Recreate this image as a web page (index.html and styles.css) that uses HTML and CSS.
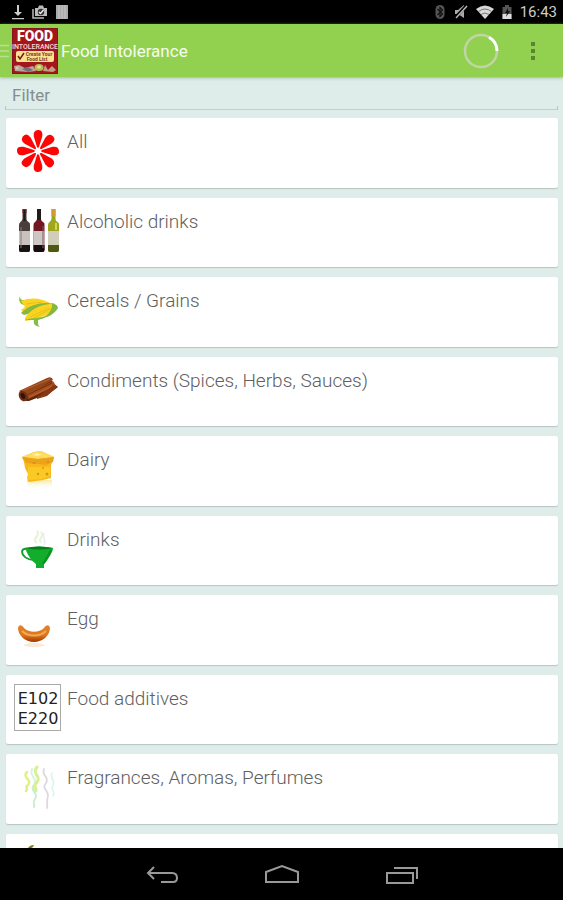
FILE: index.html
```html
<!DOCTYPE html>
<html lang="en">
<head>
<meta charset="utf-8">
<meta name="viewport" content="width=device-width, initial-scale=1">
<title>Food Intolerance</title>
<link rel="stylesheet" href="styles.css">
</head>
<body>
<div class="status-bar">
  <div class="status-group">
    <svg width="12" height="16" viewBox="0 0 12 16" fill="#ccc" aria-hidden="true"><path d="M5 1h2v7h3l-4 4-4-4h3zM0 14h12v1.300H0z"/></svg>
    <svg width="16" height="16" viewBox="0 0 16 16" fill="none" aria-hidden="true"><path d="M1 5v9h11" stroke="#bbb" stroke-width="1.500"/><path d="M3 4h3l1-2.500h4L12 4h3v8H3z" fill="#bbb"/><circle cx="9" cy="8" r="3.200" fill="#333"/><path d="M7 8l1.500 1.500L11.500 6" stroke="#eee" stroke-width="1.400"/></svg>
    <svg width="12" height="16" viewBox="0 0 12 16" aria-hidden="true"><path fill="#aaa" d="M0 1h12v14H0z"/><path d="M3 1v14M6 1v14M9 1v14" stroke="#c8c8c8"/></svg>
  </div>
  <div class="status-group">
    <svg width="12" height="16" viewBox="0 0 12 16" fill="none" aria-hidden="true"><rect x="1.500" y="1" width="9" height="14" rx="4.500" fill="#555"/><path d="M3.500 5l5 5L6 12.500v-9L8.500 6l-5 5" stroke="#111" stroke-width="1.200"/></svg>
    <svg width="14" height="16" viewBox="0 0 14 16" aria-hidden="true"><path d="M1 6h3l6-5v13L4 10H1z" fill="#aaa"/><path d="M13 1L1 14" stroke="#000" stroke-width="3"/><path d="M13 2L2 14" stroke="#bbb" stroke-width="1.400"/></svg>
    <svg width="18" height="16" viewBox="0 0 18 16" aria-hidden="true"><path d="M0 5q9-7 18 0L9 15z" fill="#d8d8d8"/><path d="M2.500 7.500q6.500-5 13 0M5 10.500q4-3 8 0" fill="none" stroke="#777"/></svg>
    <svg width="10" height="16" viewBox="0 0 10 16" aria-hidden="true"><path d="M3 1h4v2h2.500v12h-9V3H3z" fill="#555"/><path d="M.5 10h9v5h-9z" fill="#ddd"/><path d="M6 4L3 9h2l-1 4 4-6H6z" fill="#111"/></svg>
    <span class="clock">16:43</span>
  </div>
</div>

<header class="app-bar">
  <button class="drawer" type="button" aria-label="Open menu">
    <svg width="10" height="16" viewBox="0 0 10 16" aria-hidden="true"><path d="M0 2.500h9M0 8h9M0 13.500h9" stroke="#b9e08c" stroke-width="1.500"/></svg>
  </button>
  <svg class="logo" width="46" height="46" viewBox="0 0 46 46" role="img" aria-label="Food Intolerance logo">
    <rect width="46" height="46" fill="#a3161c"/>
    <rect x=".5" y=".5" width="45" height="45" fill="none" stroke="#85151a"/>
    <text class="logo-title" x="23" y="13" text-anchor="middle">FOOD</text>
    <text class="logo-subtitle" x="23" y="21" text-anchor="middle">INTOLERANCE</text>
    <rect x="4" y="23" width="38" height="11" rx="2" fill="#fbe093"/>
    <path d="M6 28l2 3 4-6" fill="none" stroke="#6b1f10" stroke-width="1.500"/>
    <text class="logo-note" x="27" y="28" text-anchor="middle">Create Your</text>
    <text class="logo-note" x="25" y="33" text-anchor="middle">Food List</text>
    <path d="M2 38l5-1 6 3 8-2 3 5-8 1-13-1z" fill="#b9a5a0"/>
    <path d="M10 41l6-2 5 3-5 2z" fill="#6f7279"/>
    <ellipse cx="27" cy="39.500" rx="4.500" ry="3.500" fill="#b3bd58"/>
    <ellipse cx="27" cy="39" rx="2" ry="1.500" fill="#e7dca0"/>
    <path d="M31 43l2-6 3 5 4-4 4 4-3 2z" fill="#c49d87"/>
    <circle cx="5" cy="40" r="1.500" fill="#e3c2a5"/>
  </svg>
  <h1>Food Intolerance</h1>
  <svg class="spinner" width="36" height="36" viewBox="0 0 36 36" role="img" aria-label="Loading" fill="none"><circle cx="18" cy="18" r="16" stroke="#bfd6a4" stroke-width="2.500"/><path d="M26 4.200A16 16 0 0 1 34 18" stroke="#fff" stroke-width="3"/></svg>
  <button class="overflow" type="button" aria-label="More options">
    <svg width="6" height="20" viewBox="0 0 6 20" fill="#5c8435" aria-hidden="true"><path d="M1 1h4v4H1zM1 8h4v4H1zM1 15h4v4H1z"/></svg>
  </button>
</header>

<main>
  <input class="filter" type="text" placeholder="Filter" aria-label="Filter">
  <ul class="categories">
    <li><a href="#all">
      <svg viewBox="0 0 48 48" aria-hidden="true"><defs><path id="petal" d="M24 21L23 20L19.800 9.500Q18.800 3.500 24 3t4.200 6.500L25 20z"/></defs>
        <g fill="#fb0505"><use href="#petal"/><use href="#petal" transform="rotate(45 24 24)"/><use href="#petal" transform="rotate(90 24 24)"/><use href="#petal" transform="rotate(135 24 24)"/><use href="#petal" transform="rotate(180 24 24)"/><use href="#petal" transform="rotate(225 24 24)"/><use href="#petal" transform="rotate(270 24 24)"/><use href="#petal" transform="rotate(315 24 24)"/></g></svg>
      <span>All</span></a></li>
    <li><a href="#alcohol">
      <svg viewBox="0 0 48 48" aria-hidden="true"><defs><path id="bottle" d="M3.500 0h4v10q0 2 2 3t1.500 3v25q0 2-2 2H2q-2 0-2-2V16q0-2 1.500-3t2-3z"/></defs>
        <g transform="translate(5 2)"><use href="#bottle" fill="#493e3b"/><path d="M3.500 0h4v4h-4z" fill="#8a2327"/><path d="M5.500 1v11" stroke="#201a1a" stroke-width="2"/><path d="M0 22h11v14H0z" fill="#c9c1bd"/><path d="M0 36h11v5q0 2-2 2H2q-2 0-2-2z" fill="#171313"/><path d="M2 18v21" stroke="#887e78"/></g>
        <g transform="translate(19.500 2)"><use href="#bottle" fill="#721720"/><path d="M3.500 0h4v11h-4z" fill="#21191b"/><path d="M0 22h11v14H0z" fill="#cdc6c4"/><path d="M0 36h11v5q0 2-2 2H2q-2 0-2-2z" fill="#160c0e"/><path d="M9.500 17v22" stroke="#81575a"/></g>
        <g transform="translate(34 2)"><use href="#bottle" fill="#a0a51e"/><path d="M3.500 0h4v7h-4z" fill="#d39a30"/><path d="M0 22h11v14H0z" fill="#d1cdbc"/><path d="M0 36h11v5q0 2-2 2H2q-2 0-2-2z" fill="#4c5814"/><path d="M8 14v7" stroke="#d1d653" stroke-width="2"/></g></svg>
      <span>Alcoholic drinks</span></a></li>
    <li><a href="#cereals">
      <svg viewBox="0 0 48 48" aria-hidden="true"><path d="M6 10c0 4 2 5 7 4l-3 5c-4-1-6-4-4-9z" fill="#8fbe35"/><path d="M7 15c10-4 20-3 29 2l-18 8-9 1-2-2 4-3z" fill="#fbd320"/><path d="M12 18l16-2M12 22l13-3" stroke="#e5bb1a" stroke-width=".8"/><path d="M7 27c8-7 19-12 34-9-9 0-17 5-23 9l-8 2z" fill="#83b843"/><path d="M11 32c5-9 17-15 30-14 1 7-12 15-30 17z" fill="#f9d31e"/><path d="M16 31l19-9M20 32l18-10" stroke="#e6bb18" stroke-width=".8"/><path d="M38 17c4 1 6 3 6 5-3 5-8 9-16 10 6-3 11-8 10-15z" fill="#83b93e"/><path d="M11 34c8-3 16-1 22-5-2 4-6 4-9 5 0 4 0 6 2 7-5-1-7-3-6-7z" fill="#83bd45"/></svg>
      <span>Cereals / Grains</span></a></li>
    <li><a href="#condiments">
      <svg viewBox="0 0 48 48" aria-hidden="true"><g transform="translate(-1 -5)"><path d="M7 33l28-13q4-2 5 2l5 4-8 6-21 8q-8 1-9-7z" fill="#5e270f"/><path d="M6 30L34 17q5-2 6 2L14 34z" fill="#94451a"/><path d="M14 33l26-13 3 5-28 13z" fill="#a34d1d"/><path d="M24 36l17-12 3 2-10 9-10 3z" fill="#873811"/><path d="M9 30l28-12M17 36l22-11" stroke="#b9622a"/><path d="M14 34l25-12" stroke="#6b2c12"/><ellipse cx="10" cy="35" rx="4" ry="5.500" transform="rotate(-25 10 35)" fill="#6c3015"/><ellipse cx="10" cy="35" rx="2" ry="3" transform="rotate(-25 10 35)" fill="#30120b"/></g></svg>
      <span>Condiments (Spices, Herbs, Sauces)</span></a></li>
    <li><a href="#dairy">
      <svg viewBox="0 0 48 48" aria-hidden="true"><defs><linearGradient id="reflection" x2="0" y2="1"><stop stop-color="#f6d656" stop-opacity=".55"/><stop offset="1" stop-color="#fff" stop-opacity="0"/></linearGradient></defs><path d="M13 35h25v10H14z" fill="url(#reflection)"/><path d="M8 12l12-5 7-1 13 6-1 3-2 5v13l-8 2-14 2q-3-2-1-8l-3-6-1-6z" fill="#f8b81b"/><path d="M8 12l12-5 7-1 13 6-16 2z" fill="#ffdc5f"/><path d="M8 12l16 2 16-2-1 5-7 3-8-1-12-1z" fill="#eba31b"/><path d="M14 22h22v9l-8 3-14 1z" fill="#fbc923"/><g fill="#d99318"><ellipse cx="20" cy="18" rx="2" ry="1"/><circle cx="33" cy="29" r="1.500"/><circle cx="24" cy="29" r="1.200"/><circle cx="29" cy="23" r="1"/><circle cx="34" cy="17" r="1.200"/></g><path d="M18 10l5-2 5 2-5 1z" fill="#fff0ac"/></svg>
      <span>Dairy</span></a></li>
    <li><a href="#drinks">
      <svg viewBox="0 0 48 48" aria-hidden="true"><path d="M23 18c-7-5 5-7 0-12M27 18c-4-5 5-7 0-11" fill="none" stroke="#e6f3d9" stroke-width="2"/><path d="M30 20c3-6-2-6 0-12" fill="none" stroke="#e9ecef" stroke-width="1.500"/><path d="M16 25q-6-3-8 1c0 5 5 9 12 9" fill="none" stroke="#159c2a" stroke-width="1.800"/><path d="M11 23q14-3 28 0c0 4-4 9-7 14l-2 2v4h-8v-4c-5-4-8-8-11-16z" fill="#12ad2b"/><path d="M11 23q14-3 28 0-13 3-28 0z" fill="#087c1a"/><path d="M37 25q-3 7-8 14" fill="none" stroke="#07931f" stroke-width="2"/></svg>
      <span>Drinks</span></a></li>
    <li><a href="#egg">
      <svg viewBox="0 0 48 48" aria-hidden="true"><defs><linearGradient id="sausage" x2="0" y2="1"><stop stop-color="#df842e"/><stop offset=".6" stop-color="#df7619"/><stop offset="1" stop-color="#9b3707"/></linearGradient></defs><path d="M9 41q11-5 22 0-4 2-11 2t-11-2z" fill="#fae8d9"/><path d="M4 24c1-4 4-3 6 0 5 5 15 5 20 0 2-3 5-4 6 0 0 7-7 14-16 14S4 31 4 24z" fill="url(#sausage)"/><path d="M8 27c6 6 18 6 24 0" fill="none" stroke="#f1a952" stroke-width="2"/></svg>
      <span>Egg</span></a></li>
    <li><a href="#additives">
      <svg viewBox="0 0 48 48" aria-hidden="true"><rect x=".5" y=".5" width="46" height="46" fill="#fff" stroke="#aaa"/><text class="code" x="24" y="20" text-anchor="middle">E102</text><text class="code" x="24" y="40" text-anchor="middle">E220</text></svg>
      <span>Food additives</span></a></li>
    <li><a href="#fragrances">
      <svg viewBox="0 0 48 48" aria-hidden="true" fill="none" stroke-linecap="round"><path d="M13 9c-6 6 6 7 1 13-4 3 1 3-2 6" stroke="#dff184" stroke-width="2.500"/><path d="M18 6c-3 7 4 8 3 13s-3 6 0 9" stroke="#d5f5e0" stroke-width="2"/><path d="M23 4c-6 8 5 8 0 15-5 6 0 5-1 9" stroke="#d8f093" stroke-width="3"/><path d="M19 23c-2 7 6 7 2 13-3 4 0 5-1 8" stroke="#c4f1cb" stroke-width="2"/><path d="M30 6c-3 7 6 8 2 14-5 6 3 7 2 13-2 5 0 8-1 12" stroke="#ddd8e0" stroke-width="1.800"/><path d="M38 10c-3 6 4 7 1 12-3 5 3 6 0 11" stroke="#dcf4f0" stroke-width="1.600"/></svg>
      <span>Fragrances, Aromas, Perfumes</span></a></li>
    <li><a href="#fruit" aria-label="Fruit">
      <svg viewBox="0 0 48 48" aria-hidden="true"><path d="M13 8q1-6 7-6l-1 2q-3 1-3 8c10-3 18 3 18 13s-8 18-17 18S4 37 5 25c0-7 4-12 10-13z" fill="#70811d"/></svg></a></li>
  </ul>
</main>

<nav class="nav-bar" aria-label="System navigation">
  <button type="button" aria-label="Back"><svg width="32" height="20" viewBox="0 0 32 20" aria-hidden="true"><path d="M8 3L2 9l6 6M2 9h24q5 0 5 5 0 4-4 4H15"/></svg></button>
  <button type="button" aria-label="Home"><svg width="36" height="20" viewBox="0 0 36 20" aria-hidden="true"><path d="M2 18V8l16-6 16 6v10z"/></svg></button>
  <button type="button" aria-label="Recent apps"><svg width="34" height="20" viewBox="0 0 34 20" aria-hidden="true"><path d="M2 9h26v10H2zM9 4h23v11"/></svg></button>
</nav>
</body>
</html>
```
FILE: styles.css
```css
* {
  box-sizing: border-box;
}

body {
  display: flex;
  flex-direction: column;
  height: 100vh;
  margin: 0;
  overflow: hidden;
  background: #deecea;
  color: #666;
  font-family: Roboto, "Liberation Sans", sans-serif;
}

button {
  display: flex;
  align-items: center;
  justify-content: center;
  padding: 0;
  border: 0;
  background: none;
}

svg {
  flex: none;
}

.status-bar {
  display: flex;
  flex: none;
  align-items: center;
  justify-content: space-between;
  height: 24px;
  padding: 0 6px 0 12px;
  background: #000;
}

.status-group {
  display: flex;
  align-items: center;
  gap: 8px;
}

.clock {
  color: #ccc;
  font-size: 15px;
  line-height: 24px;
}

.app-bar {
  display: flex;
  flex: none;
  align-items: center;
  height: 53px;
  padding-right: 8px;
  background: #92d14f;
  box-shadow: 0 1px 3px #9fb5a0;
}

.drawer {
  width: 12px;
  height: 48px;
  justify-content: flex-start;
}

.logo-title {
  fill: #fff;
  font-size: 14px;
  font-weight: 900;
}

.logo-subtitle {
  fill: #f7d8d8;
  font-size: 7px;
  font-weight: 500;
}

.logo-note {
  fill: #7d3b22;
  font-size: 5px;
  font-weight: 700;
}

h1 {
  flex: 1;
  margin: 0 0 0 3px;
  color: #f7fcf0;
  font-size: 17px;
  font-weight: 400;
}

.overflow {
  width: 44px;
  height: 48px;
  margin-left: 12px;
}

main {
  display: flex;
  flex: 1;
  flex-direction: column;
  gap: 8px;
  min-height: 0;
  padding: 0 5px;
  overflow: hidden;
}

.filter {
  flex: none;
  width: 100%;
  height: 33px;
  padding: 3px 7px 0;
  border: 0;
  background:
    linear-gradient(#b5c3c1, #b5c3c1) left bottom / 1px 4px no-repeat,
    linear-gradient(#b5c3c1, #b5c3c1) right bottom / 1px 4px no-repeat,
    linear-gradient(#c2cfcd, #c2cfcd) left bottom / 100% 1px no-repeat;
  color: #666;
  font-family: inherit;
  font-size: 17px;
}

.filter::placeholder {
  color: #858e8d;
  opacity: 1;
}

.categories {
  display: flex;
  flex-direction: column;
  gap: 10px;
  margin: 0;
  padding: 0;
  list-style: none;
}

.categories li {
  flex: none;
  height: 69px;
  margin: 0 0 0 1px;
  border-radius: 2px;
  background: #fff;
  box-shadow: 0 1px 1px #b9c5c3;
}

.categories li:nth-child(odd) {
  height: 70px;
}

.categories a {
  display: flex;
  gap: 5px;
  height: 100%;
  padding: 9px 8px;
  color: #606060;
  font-size: 19px;
  font-weight: 300;
  line-height: 29px;
  text-decoration: none;
}

.categories svg {
  width: 48px;
  height: 48px;
}

.code {
  fill: #222;
  font-family: "DejaVu Sans", sans-serif;
  font-size: 16px;
  font-weight: 400;
}

.nav-bar {
  display: flex;
  flex: none;
  justify-content: center;
  height: 52px;
  background: #000;
}

.nav-bar button {
  width: 120px;
}

.nav-bar svg {
  fill: none;
  stroke: #999;
  stroke-width: 2;
}
```
